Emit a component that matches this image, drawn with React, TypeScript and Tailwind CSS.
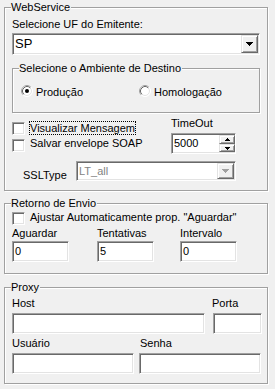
import React from "react";

const sunken =
  "border border-t-[#a0a0a0] border-l-[#a0a0a0] border-r-white border-b-white shadow-[inset_1px_1px_0_#696969,inset_-1px_-1px_0_#e3e3e3] bg-white";
const raised =
  "border border-t-[#e3e3e3] border-l-[#e3e3e3] border-r-[#696969] border-b-[#696969] shadow-[inset_1px_1px_0_#fff,inset_-1px_-1px_0_#a0a0a0] bg-[#f0f0f0]";
const group =
  "m-0 p-0 border border-[#a0a0a0] shadow-[inset_1px_1px_0_#fff,1px_1px_0_#fff]";
const legend = "ml-[6px] h-[13px] leading-[13px] bg-[#f0f0f0] pr-[1px]";

function DownArrow({ color = "#000" }: { color?: string }) {
  return (
    <svg width="7" height="4" viewBox="0 0 7 4" shapeRendering="crispEdges">
      <path d="M0 0h7v1H0zM1 1h5v1H1zM2 2h3v1H2zM3 3h1v1H3z" fill={color} />
    </svg>
  );
}

function SmallArrow({ up }: { up?: boolean }) {
  return (
    <svg width="5" height="3" viewBox="0 0 5 3" shapeRendering="crispEdges">
      <path
        d={up ? "M2 0h1v1H2zM1 1h3v1H1zM0 2h5v1H0z" : "M0 0h5v1H0zM1 1h3v1H1zM2 2h1v1H2z"}
        fill="#000"
      />
    </svg>
  );
}

function Radio({ checked }: { checked?: boolean }) {
  return (
    <svg width="12" height="12" viewBox="0 0 12 12" className="shrink-0">
      <circle cx="6" cy="6" r="5.5" fill="#fff" stroke="#fff" />
      <path d="M2.11 9.89A5.5 5.5 0 0 1 9.89 2.11" fill="none" stroke="#a0a0a0" />
      <circle cx="6" cy="6" r="4.5" fill="#fff" stroke="#e3e3e3" />
      <path d="M2.82 9.18A4.5 4.5 0 0 1 9.18 2.82" fill="none" stroke="#696969" />
      {checked && <circle cx="6" cy="6" r="2" fill="#000" />}
    </svg>
  );
}

function Check() {
  return <div className={`${sunken} w-[13px] h-[13px] shrink-0`} />;
}

function Edit({ w, value }: { w: string; value?: string }) {
  return (
    <div className={`${sunken} ${w} h-[21px] flex items-center pl-[2px]`}>
      {value}
    </div>
  );
}

export default function App() {
  return (
    <div className="w-[275px] h-[389px] overflow-hidden bg-[#f0f0f0] pl-[4px] font-['Liberation_Sans',Arial,sans-serif] text-[11px] leading-[13px] text-black">
      <fieldset className={`${group} mt-[1px] w-[264px]`}>
        <legend className={legend}>WebService</legend>
        <div className="pl-[7px] pb-[8px]">
          <div className="mt-[4px]">Selecione UF do Emitente:</div>
          <div className={`${sunken} mt-[2px] w-[248px] h-[22px] flex items-center pr-[1px]`}>
            <span className="flex-1 pl-[2px] text-[13px] leading-[20px]">SP</span>
            <div className={`${raised} w-[17px] h-[18px] flex items-center justify-center`}>
              <DownArrow />
            </div>
          </div>

          <fieldset className={`${group} mt-[7px] w-[248px]`}>
            <legend className={legend}>Selecione o Ambiente de Destino</legend>
            <div className="mt-[10px] pl-[8px] pb-[13px] flex">
              <div className="w-[118px] flex items-start">
                <Radio checked />
                <span className="ml-[3px] mt-[1px]">Produção</span>
              </div>
              <div className="flex items-start">
                <Radio />
                <span className="ml-[3px] mt-[1px]">Homologação</span>
              </div>
            </div>
          </fieldset>

          <div className="flex">
            <div className="w-[159px] pt-[8px]">
              <div className="flex items-start">
                <div className="mt-[1px]">
                  <Check />
                </div>
                <span className="ml-[4px] h-[14px] leading-[12px] border border-dotted border-black whitespace-nowrap">
                  Visualizar Mensagem
                </span>
              </div>
              <div className="mt-[2px] flex items-start">
                <div className="mt-[2px]">
                  <Check />
                </div>
                <span className="ml-[5px]">Salvar envelope SOAP</span>
              </div>
            </div>
            <div className="pt-[4px]">
              <div>TimeOut</div>
              <div className={`${sunken} mt-[3px] w-[65px] h-[21px] flex items-center pl-[2px]`}>
                <span className="flex-1">5000</span>
                <div className="w-[16px] h-[17px] flex flex-col">
                  <div className={`${raised} h-[9px] flex items-center justify-center`}>
                    <SmallArrow up />
                  </div>
                  <div className={`${raised} h-[8px] flex items-center justify-center`}>
                    <SmallArrow />
                  </div>
                </div>
              </div>
            </div>
          </div>

          <div className="mt-[7px] pl-[11px] flex items-start">
            <span className="w-[53px] mt-[8px]">SSLType</span>
            <div className={`${sunken} w-[160px] h-[20px] flex items-center pr-[1px]`}>
              <span className="flex-1 pl-[2px] text-[#838383]">LT_all</span>
              <div className={`${raised} w-[17px] h-[16px] flex items-center justify-center`}>
                <DownArrow color="#a0a0a0" />
              </div>
            </div>
          </div>
        </div>
      </fieldset>

      <fieldset className={`${group} mt-[6px] w-[264px]`}>
        <legend className={legend}>Retorno de Envio</legend>
        <div className="pl-[7px] pb-[11px]">
          <div className="mt-[1px] flex items-start">
            <div className="mt-[1px]">
              <Check />
            </div>
            <span className="ml-[5px]">Ajustar Automaticamente prop. "Aguardar"</span>
          </div>
          <div className="mt-[2px] flex">
            <div className="w-[57px]">
              <div>Aguardar</div>
              <div className="mt-[1px]">
                <Edit w="w-[57px]" value="0" />
              </div>
            </div>
            <div className="ml-[28px] w-[57px]">
              <div>Tentativas</div>
              <div className="mt-[1px]">
                <Edit w="w-[57px]" value="5" />
              </div>
            </div>
            <div className="ml-[26px] w-[57px]">
              <div>Intervalo</div>
              <div className="mt-[1px]">
                <Edit w="w-[57px]" value="0" />
              </div>
            </div>
          </div>
        </div>
      </fieldset>

      <fieldset className={`${group} mt-[7px] w-[264px]`}>
        <legend className={legend}>Proxy</legend>
        <div className="pl-[7px] pb-[9px]">
          <div className="mt-[3px] flex">
            <div className="w-[193px]">
              <div>Host</div>
              <div className="mt-[3px]">
                <Edit w="w-[193px]" />
              </div>
            </div>
            <div className="ml-[7px] w-[50px]">
              <div>Porta</div>
              <div className="mt-[3px] ml-[1px]">
                <Edit w="w-[49px]" />
              </div>
            </div>
          </div>
          <div className="mt-[3px] flex">
            <div className="w-[122px]">
              <div>Usuário</div>
              <div className="mt-[3px]">
                <Edit w="w-[122px]" />
              </div>
            </div>
            <div className="ml-[5px] w-[122px]">
              <div className="pl-[1px]">Senha</div>
              <div className="mt-[3px]">
                <Edit w="w-[122px]" />
              </div>
            </div>
          </div>
        </div>
      </fieldset>
    </div>
  );
}
